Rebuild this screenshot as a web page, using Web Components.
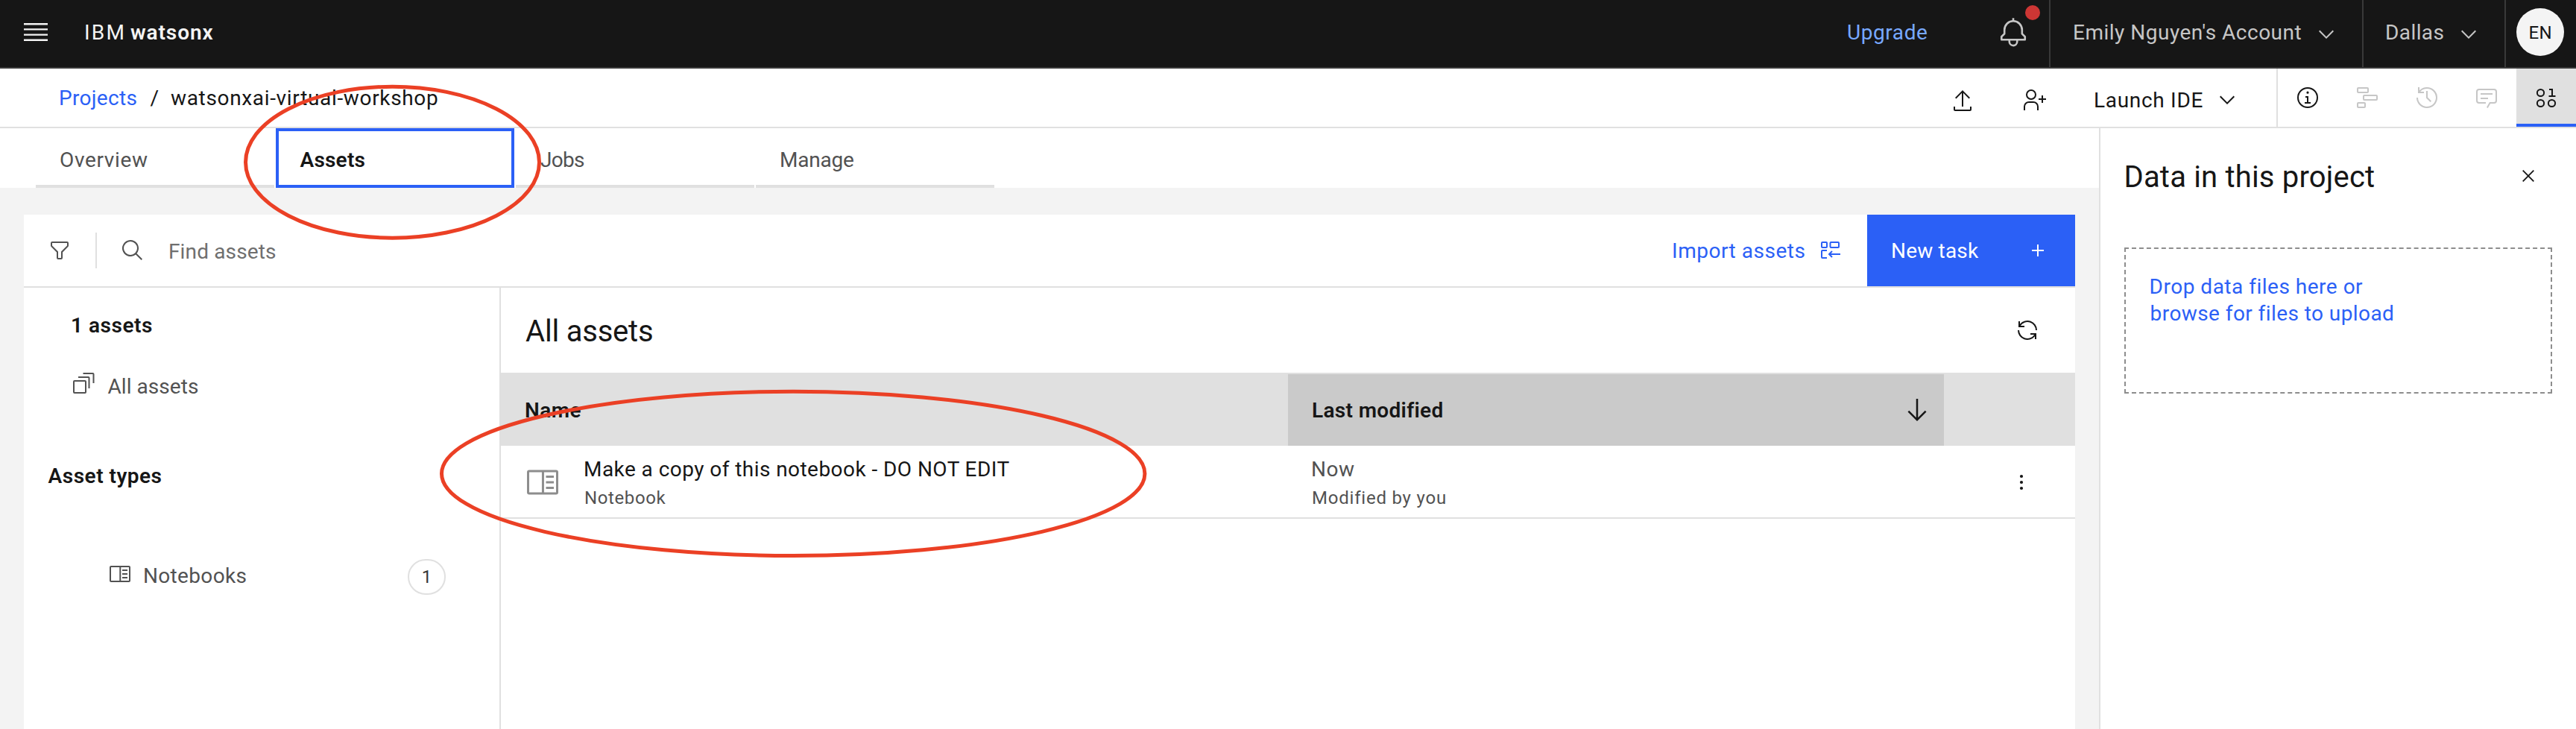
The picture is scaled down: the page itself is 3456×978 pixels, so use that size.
<!DOCTYPE html>
<html lang="en">
<head>
<meta charset="utf-8">
<title>IBM watsonx</title>
<style>
html,body{margin:0;padding:0;background:#f3f3f3}
body{font-family:Roboto,"Noto Sans",sans-serif;color:#161616;overflow:hidden}
</style>
</head>
<body>
<watsonx-app></watsonx-app>
<script>
const ICONS = {
  menu: '<g transform="scale(1.6)"><path d="M2 14.8H18V16H2zM2 11.2H18V12.4H2zM2 7.6H18V8.8H2zM2 4H18V5.2H2z"/></g>',
  bell: '<path d="M28.7071,19.293,26,16.5859V13a10.0136,10.0136,0,0,0-9-9.9492V1H15V3.0508A10.0136,10.0136,0,0,0,6,13v3.5859L3.2929,19.293A1,1,0,0,0,3,20v3a1,1,0,0,0,1,1h7v.7768a5.152,5.152,0,0,0,4.5,5.1987A5.0057,5.0057,0,0,0,21,25V24h7a1,1,0,0,0,1-1V20A1,1,0,0,0,28.7071,19.293ZM19,25a3,3,0,0,1-6,0V24h6Zm8-3H5V20.4141L7.707,17.707A1,1,0,0,0,8,17V13a8,8,0,0,1,16,0v4a1,1,0,0,0,.293.707L27,20.4141Z"/>',
  chevron: '<path d="M16 22L6 12 7.4 10.6 16 19.2 24.6 10.6 26 12z"/>',
  upload: '<path d="M26 24v4H6V24H4v4a2 2 0 0 0 2 2H26a2 2 0 0 0 2-2V24zM6 12l1.41 1.41L15 5.83V24h2V5.83l7.59 7.58L26 12 16 2z"/>',
  follow: '<path d="M32 14H28V10H26V14H22V16H26V20H28V16H32zM12 4a5 5 0 1 1-5 5 5 5 0 0 1 5-5m0-2a7 7 0 1 0 7 7 7 7 0 0 0-7-7zM22 30H20V25a5 5 0 0 0-5-5H9a5 5 0 0 0-5 5v5H2V25a7 7 0 0 1 7-7h6a7 7 0 0 1 7 7z"/>',
  info: '<path d="M17 22V14H13V16H15V22H12V24H20V22zM16 7.6a1.6 1.6 0 1 0 1.6 1.6A1.6 1.6 0 0 0 16 7.6z"/><circle class="s" cx="16" cy="16" r="13"/>',
  gantt: '<g class="s"><rect x="3" y="3" width="14" height="6" rx="1"/><rect x="11" y="13" width="18" height="6" rx="1"/><rect x="3" y="23" width="10" height="6" rx="1"/></g>',
  history: '<path d="M20.59 22L15 16.41V7h2v8.58l5 5.01zM16 2A13.94 13.94 0 0 0 6 6.23V2H4v8h8V8H7.08A12 12 0 1 1 4 16H2A14 14 0 1 0 16 2z"/>',
  chat: '<path d="M17.74 30L16 29l4-7h6a2 2 0 0 0 2-2V8a2 2 0 0 0-2-2H6A2 2 0 0 0 4 8V20a2 2 0 0 0 2 2h9v2H6a4 4 0 0 1-4-4V8A4 4 0 0 1 6 4H26a4 4 0 0 1 4 4V20a4 4 0 0 1-4 4H21.16zM8 10H24v2H8zM8 16H18v2H8z"/>',
  data: '<g class="s"><circle cx="8.5" cy="9.5" r="4.6"/><circle cx="8.5" cy="23.5" r="4.6"/><circle cx="23.5" cy="23.5" r="4.6"/></g><path d="M19.5 13H23V6H20V4H25V13H28.5V15H19.5z"/>',
  filter: '<path d="M18,28H14a2,2,0,0,1-2-2V18.41L4.59,11A2,2,0,0,1,4,9.59V6A2,2,0,0,1,6,4H26a2,2,0,0,1,2,2V9.59A2,2,0,0,1,27.41,11L20,18.41V26A2,2,0,0,1,18,28ZM6,6V9.59l8,8V26h4V17.59l8-8V6Z"/>',
  search: '<path d="M29,27.5859l-7.5521-7.5521a11.0177,11.0177,0,1,0-1.4141,1.4141L27.5859,29ZM4,13a9,9,0,1,1,9,9A9.01,9.01,0,0,1,4,13Z"/>',
  importer: '<g class="s"><rect x="4" y="5" width="7" height="7" rx="1"/><rect x="15.5" y="5" width="11.5" height="7" rx="1"/><path d="M11 16H5a1 1 0 0 0-1 1v8a1 1 0 0 0 1 1h6M29 21H14M18 17l-4 4 4 4"/></g>',
  plus: '<path d="M15 8h2v7h7v2h-7v7h-2v-7H8v-2h7z"/>',
  close: '<path class="s" style="stroke-width:1.8" d="M8.7 8.7L23.3 23.3M23.3 8.7L8.7 23.3"/>',
  renew: '<path d="M12 10H6.78A11 11 0 0 1 27 16h2A13 13 0 0 0 6 7.68V4H4v8h8zM20 22h5.22A11 11 0 0 1 5 16H3a13 13 0 0 0 23 8.32V28h2V20H20z"/>',
  down: '<path d="M24.59 16.59L17 24.17V4H15V24.17L7.41 16.59 6 18 16 28 26 18z"/>',
  stack: '<g class="s"><rect x="3" y="13" width="16" height="16" rx="1"/><path d="M9 8H22.5a1 1 0 0 1 1 1V23M15.5 3H28.5a1 1 0 0 1 1 1V16"/></g>',
  notebook: '<g class="s"><rect x="3" y="6" width="26" height="20" rx="1"/><path d="M16.3 6V26M19 11H26M19 16H26M19 21H26"/></g>',
  dots: '<circle cx="16" cy="8" r="2.1"/><circle cx="16" cy="16" r="2.1"/><circle cx="16" cy="24" r="2.1"/>'
};

function place(el) {
  el.style.marginLeft = el.getAttribute('l') === 'auto' ? 'auto' : (el.getAttribute('l') || 0) + 'px';
  el.style.marginTop = (el.getAttribute('t') || 0) + 'px';
}

function define(name, html, setup) {
  const tpl = document.createElement('template');
  tpl.innerHTML = html;
  customElements.define(name, class extends HTMLElement {
    connectedCallback() {
      if (this.shadowRoot) return;
      this.attachShadow({ mode: 'open' }).append(tpl.content.cloneNode(true));
      if (setup) setup(this, this.shadowRoot);
    }
  });
}

const pen = document.createElement('canvas').getContext('2d');

// A single line of type, tracked so that its ink spans exactly `w` pixels.
define('ui-text', `<style>
:host{display:block;flex:none;white-space:nowrap;font-size:28px;line-height:35px}
:host([size="24"]){font-size:24px;line-height:28px}
:host([size="40"]){font-size:40px;line-height:47px}
:host([bold]){font-weight:600}
span{display:inline-block;vertical-align:top}
</style><span><slot></slot></span>`, (el, root) => {
  place(el);
  const text = el.textContent, w = parseFloat(el.getAttribute('w'));
  pen.font = (el.hasAttribute('bold') ? '600 ' : '400 ') + (el.getAttribute('size') || 28) + 'px Roboto, "Noto Sans", sans-serif';
  const m = pen.measureText(text);
  const ink = m.actualBoundingBoxLeft + m.actualBoundingBoxRight;
  el.style.width = w + 'px';
  const span = root.querySelector('span');
  if (text.length > 1) span.style.letterSpacing = ((w - ink) / (text.length - 1)).toFixed(3) + 'px';
  span.style.marginLeft = m.actualBoundingBoxLeft.toFixed(2) + 'px';
});

define('ui-icon', `<style>
:host{display:block;flex:none}
svg{display:block;width:100%;height:100%;fill:currentColor}
.s{fill:none;stroke:currentColor;stroke-width:2}
</style><svg viewBox="0 0 32 32"></svg>`, (el, root) => {
  place(el);
  const s = (el.getAttribute('size') || 32) + 'px';
  el.style.width = s;
  el.style.height = s;
  root.querySelector('svg').innerHTML = ICONS[el.getAttribute('name')];
});

define('app-header', `<style>
:host{display:flex;align-items:flex-start;height:92px;box-sizing:border-box;border-bottom:2px solid #393939;background:#161616;color:#f4f4f4}
.right,.cell{display:flex;align-items:flex-start}
.right{margin-left:auto;color:#c6c6c6}
.up{color:#78a9ff}
.bell{position:relative}
.bell i{position:absolute;left:132px;top:7px;width:20px;height:20px;border-radius:50%;background:#cd3634}
.cell{box-sizing:border-box;height:90px;border-left:2px solid #393939}
.account{width:420px;margin-left:27px}.region{width:191px}.user{width:96px}
.avatar{width:64px;height:64px;margin:11px 0 0 14px;border-radius:50%;background:#f4f4f4;color:#161616}
</style>
<ui-icon name="menu" size="40" l="28" t="23"></ui-icon>
<ui-text l="47" t="26" w="50.5">IBM</ui-text>
<ui-text bold l="9.5" t="26" w="110.5">watsonx</ui-text>
<div class="right">
  <ui-text class="up" t="26" w="106">Upgrade</ui-text>
  <div class="bell"><ui-icon name="bell" size="42" l="95" t="23"></ui-icon><i></i></div>
  <div class="cell account"><ui-text l="32" t="26" w="304.5">Emily Nguyen's Account</ui-text><ui-icon name="chevron" l="17.5" t="30"></ui-icon></div>
  <div class="cell region"><ui-text l="31" t="26" w="76.5">Dallas</ui-text><ui-icon name="chevron" l="17.5" t="30"></ui-icon></div>
  <div class="cell user"><div class="avatar"><ui-text size="24" l="17.5" t="19" w="29">EN</ui-text></div></div>
</div>`);

define('project-bar', `<style>
:host{display:flex;align-items:flex-start;height:80px;box-sizing:border-box;border-bottom:2px solid #e0e0e0;background:#fff}
.link{color:#2b60f6}
.right,.tools{display:flex;align-items:flex-start}
.right{margin-left:auto}
.tools{margin-left:50px;border-left:2px solid #e0e0e0;color:#c6c6c6}
.tool{display:flex;align-items:center;justify-content:center;width:80px;height:78px;box-sizing:border-box}
.dark{color:#161616}
.on{background:#e0e0e0;box-shadow:inset 0 -4px #2b60f6}
</style>
<ui-text class="link" l="81" t="22" w="102.5">Projects</ui-text>
<ui-text l="18" t="22" w="9">/</ui-text>
<ui-text l="18.5" t="22" w="358">watsonxai-virtual-workshop</ui-text>
<div class="right">
  <ui-icon name="upload" t="26.5"></ui-icon>
  <ui-icon name="follow" l="64" t="26"></ui-icon>
  <ui-text l="66" t="25" w="143.5">Launch IDE</ui-text>
  <ui-icon name="chevron" l="17.5" t="26"></ui-icon>
  <div class="tools">
    <div class="tool dark"><ui-icon name="info"></ui-icon></div>
    <div class="tool"><ui-icon name="gantt"></ui-icon></div>
    <div class="tool"><ui-icon name="history"></ui-icon></div>
    <div class="tool"><ui-icon name="chat"></ui-icon></div>
    <div class="tool dark on"><ui-icon name="data"></ui-icon></div>
  </div>
</div>`);

define('project-tabs', `<style>
:host{display:flex;gap:2px;height:80px;box-sizing:border-box;padding-left:48px;background:#fff;color:#525252}
.tab{display:flex;align-items:flex-start;width:320px;height:80px;box-shadow:inset 0 -4px #e0e0e0}
.active{color:#161616;box-shadow:inset 0 0 0 4px #2b60f6}
</style>
<div class="tab"><ui-text l="33" t="25" w="117">Overview</ui-text></div>
<div class="tab active"><ui-text bold l="32.5" t="25" w="87">Assets</ui-text></div>
<div class="tab"><ui-text l="33" t="25" w="59">Jobs</ui-text></div>
<div class="tab"><ui-text l="34" t="25" w="97">Manage</ui-text></div>`);

define('asset-toolbar', `<style>
:host{display:flex;align-items:flex-start;height:98px;box-sizing:border-box;border-bottom:2px solid #e0e0e0}
.grey{color:#525252}.hint{color:#6f6f6f}
hr{width:2px;height:48px;margin:24px 0 0 32px;border:0;background:#e0e0e0}
.import,.new{display:flex;align-items:flex-start}
.import{margin-left:auto;margin-right:33px;color:#2b60f6}
.new{width:279px;height:96px;background:#2b60f6;color:#fff}
</style>
<ui-icon class="grey" name="filter" l="32" t="32"></ui-icon><hr>
<ui-icon class="grey" name="search" l="32" t="32"></ui-icon>
<ui-text class="hint" l="34" t="32" w="142">Find assets</ui-text>
<div class="import"><ui-text t="31" w="176.5">Import assets</ui-text><ui-icon name="importer" l="18.5" t="32"></ui-icon></div>
<div class="new"><ui-text l="34" t="31" w="116">New task</ui-text><ui-icon name="plus" l="63" t="32"></ui-icon></div>`);

define('asset-nav', `<style>
:host{display:block;width:640px;box-sizing:border-box;border-right:2px solid #e0e0e0}
.col{display:flex;flex-direction:column}
.row{display:flex;align-items:flex-start;color:#525252}
.all{height:38px;margin-top:44px}
.books{height:48px;margin-top:94px}
.pill{display:flex;justify-content:center;box-sizing:border-box;width:51px;height:48px;margin-left:216.5px;border:2px solid #e0e0e0;border-radius:24px;font-size:24px;line-height:45px;color:#393939}
</style>
<div class="col">
  <ui-text bold l="65" t="33" w="107">1 assets</ui-text>
  <div class="row all"><ui-icon name="stack" l="64"></ui-icon><ui-text l="16.5" t="3" w="121.5">All assets</ui-text></div>
  <ui-text bold l="32.6" t="85" w="152">Asset types</ui-text>
  <div class="row books"><ui-icon name="notebook" l="113" t="4"></ui-icon><ui-text l="17" t="5" w="136.5">Notebooks</ui-text><div class="pill">1</div></div>
</div>`);

define('asset-table', `<style>
:host{display:block;flex:1}
.title,.head,.row,.cell{display:flex;align-items:flex-start}
.title{height:114px}
.title ui-icon{margin-right:48px}
.head{height:98px;box-sizing:border-box;border-top:2px solid #e0e0e0;background:#e0e0e0}
.cell{height:96px}
.name{width:1056px}.modified{width:880px}
.sorted{background:#cacaca}
.row{border-bottom:2px solid #e0e0e0}
.grey{color:#525252}.glyph{color:#8d8d8d}
</style>
<div class="title"><ui-text size="40" l="33" t="35" w="170">All assets</ui-text><ui-icon name="renew" l="auto" t="41"></ui-icon></div>
<div class="head">
  <div class="cell name"><ui-text bold l="33" t="31" w="74.5">Name</ui-text></div>
  <div class="cell modified sorted"><ui-text bold l="33" t="31" w="174">Last modified</ui-text><ui-icon name="down" size="40" l="617" t="28"></ui-icon></div>
</div>
<div class="row">
  <div class="cell name"><ui-icon class="glyph" name="notebook" size="48" l="32" t="25"></ui-icon>
    <div><ui-text l="33" t="14" w="570">Make a copy of this notebook - DO NOT EDIT</ui-text><ui-text class="grey" size="24" l="33" t="7" w="108.5">Notebook</ui-text></div></div>
  <div class="cell modified grey"><div><ui-text l="33" t="14" w="56">Now</ui-text><ui-text size="24" l="33" t="7" w="177">Modified by you</ui-text></div></div>
  <ui-icon name="dots" l="88" t="33"></ui-icon>
</div>`);

define('data-panel', `<style>
:host{display:block;box-sizing:border-box;width:640px;border-left:2px solid #e0e0e0;background:#fff}
.head{display:flex;align-items:flex-start;height:160px}
.head ui-icon{margin-right:48px}
.drop{display:flex;flex-direction:column;box-sizing:border-box;width:574px;height:196px;margin-left:32px;border:2px dashed #8d8d8d;color:#2b60f6}
</style>
<div class="head"><ui-text size="40" l="34.5" t="42" w="332.5">Data in this project</ui-text><ui-icon name="close" l="auto" t="48"></ui-icon></div>
<div class="drop"><ui-text l="33.6" t="33" w="283.5">Drop data files here or</ui-text><ui-text l="33.6" t="1" w="323.5">browse for files to upload</ui-text></div>`);

define('pen-marks', `<style>
:host{position:absolute;inset:0;pointer-events:none}
svg{display:block;width:100%;height:100%}
ellipse{fill:none;stroke:#eb4025;stroke-width:5}
</style>
<svg viewBox="0 0 3456 978"><ellipse cx="526.5" cy="217.7" rx="197" ry="101.5"/><ellipse cx="1064.2" cy="635.4" rx="471.7" ry="110.2"/></svg>`);

define('watsonx-app', `<style>
:host{display:flex;flex-direction:column;position:relative;width:3456px;height:978px;overflow:hidden}
.main{display:flex;flex:1;min-height:0}
.work{display:flex;flex-direction:column;width:2816px}
.panel{display:flex;flex-direction:column;flex:1;margin:36px 32px 0;background:#fff}
.body{display:flex;flex:1}
</style>
<app-header></app-header>
<project-bar></project-bar>
<div class="main">
  <div class="work">
    <project-tabs></project-tabs>
    <div class="panel"><asset-toolbar></asset-toolbar><div class="body"><asset-nav></asset-nav><asset-table></asset-table></div></div>
  </div>
  <data-panel></data-panel>
</div>
<pen-marks></pen-marks>`);
</script>
</body>
</html>
